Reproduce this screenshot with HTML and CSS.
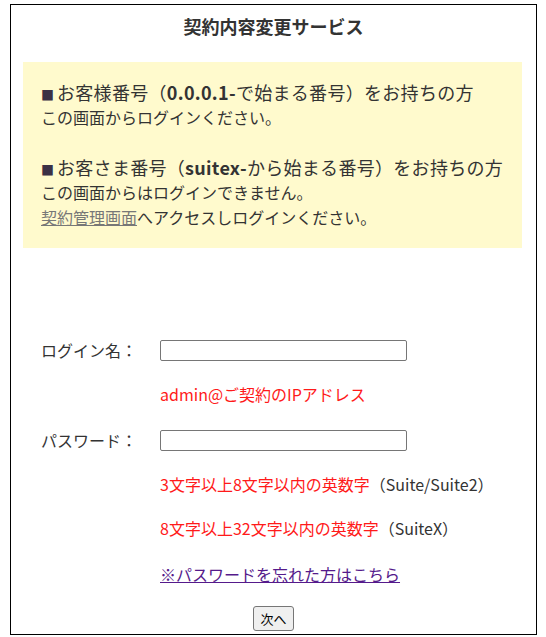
FILE: index.html
```html
<!DOCTYPE html>
<html lang="ja">
<head>
    <meta charset="UTF-8">
    <meta name="viewport" content="width=device-width, initial-scale=1.0">
    <title>契約内容変更サービス</title>
    <link rel="stylesheet" href="styles.css">
</head>
<body>
    <div class="wrap">
        <h1 class="title">契約内容変更サービス</h1>

        <!-- お知らせ -->
        <div class="notice">
            <div class="notice-block">
                <p class="lead"><span class="mark">■</span>お客様番号（<b>0.0.0.1-</b>で始まる番号）をお持ちの方</p>
                <p>この画面からログインください。</p>
            </div>
            <div class="notice-block">
                <p class="lead"><span class="mark">■</span>お客さま番号（<b>suitex-</b>から始まる番号）をお持ちの方</p>
                <p>この画面からはログインできません。</p>
                <p><a href="#" class="manage-link">契約管理画面</a>へアクセスしログインください。</p>
            </div>
        </div>

        <form class="login" onsubmit="return false">
            <div class="row">
                <label for="login-name">ログイン名：</label>
                <input type="text" id="login-name">
            </div>
            <div class="hint"><span class="red">admin@ご契約のIPアドレス</span></div>
            <div class="row row-pass">
                <label for="password">パスワード：</label>
                <input type="password" id="password">
            </div>
            <div class="hint"><span class="red">3文字以上8文字以内の英数字</span>（Suite/Suite2）</div>
            <div class="hint"><span class="red">8文字以上32文字以内の英数字</span>（SuiteX）</div>
            <div class="hint hint-link"><a href="#" class="forgot">※パスワードを忘れた方はこちら</a></div>
            <div class="submit">
                <button type="submit">次へ</button>
            </div>
        </form>
    </div>
</body>
</html>
```

FILE: styles.css
```css
body {
    margin: 0;
    font-family: "Noto Sans CJK JP", "Noto Sans", sans-serif;
    color: #333;
    background: #fff;
}
.wrap {
    width: 527px;
    height: 631px;
    box-sizing: border-box;
    margin: 4px 0 0 10px;
    border: 1px solid #000;
    padding-top: 10px;
}
.title {
    margin: 0;
    font-size: 18px;
    line-height: 22px;
    font-weight: bold;
    text-align: center;
}

/* お知らせボックス */
.notice {
    margin: 25px 14px 0 12px;
    padding: 17px 10px 18px 18px;
    background: #fffacd;
}
.notice p {
    margin: 0;
    font-size: 16px;
    line-height: 25px;
}
.notice .lead {
    font-size: 18px;
    line-height: 26px;
    letter-spacing: 0.3px;
    white-space: nowrap;
}
.mark {
    display: inline-block;
    width: 16px;
    font-size: 13px;
    line-height: 1;
    color: #3b3045;
}
.notice-block + .notice-block {
    margin-top: 24px;
}
.manage-link {
    color: #777;
}

/* ログインフォーム */
.login {
    margin-top: 90px;
    padding-left: 30px;
    display: flex;
    flex-direction: column;
    gap: 20px;
    font-size: 16px;
}
.row {
    display: flex;
    align-items: center;
    height: 24px;
}
.row label {
    width: 119px;
}
.row input {
    width: 247px;
    height: 21px;
    box-sizing: border-box;
    border: 1px solid #767676;
    border-radius: 2px;
    padding: 1px 3px;
    font-size: 13px;
}
.row-pass {
    margin-top: 2px;
}
.hint {
    padding-left: 119px;
    line-height: 24px;
}
.hint-link {
    margin-top: 2px;
}
.red {
    color: #ff1a1a;
}
.forgot {
    color: #551a8b;
}
.submit {
    text-align: center;
    margin-left: -30px;
    margin-top: -1px;
}
.submit button {
    font-family: inherit;
    font-size: 13px;
    height: 25px;
    padding: 0 6px;
    color: #000;
    background: #efefef;
    border: 1px solid #767676;
    border-radius: 3px;
}
```
